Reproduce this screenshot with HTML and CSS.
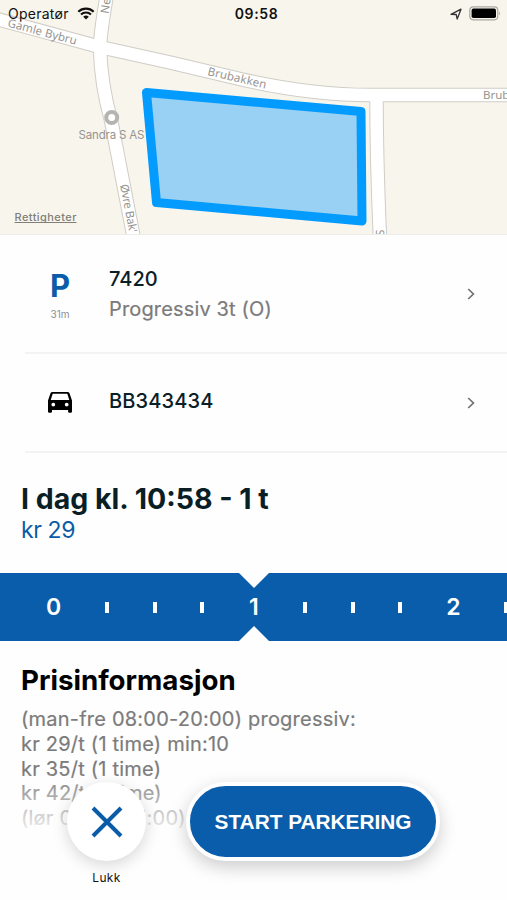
FILE: index.html
```html
<!DOCTYPE html>
<html lang="no">
<head>
<meta charset="utf-8">
<meta name="viewport" content="width=device-width">
<title>Parkering</title>
<link rel="stylesheet" href="styles.css">
</head>
<body>
<main class="screen">
  <section class="map">
    <svg class="map-canvas" viewBox="0 0 507 234" aria-hidden="true">
      <g class="road-edge">
        <path d="M-5 18.500L100 47Q170 62 240 79Q310 95 370 95H512"/>
        <path d="M107-6Q100 35 100 48Q101 85 111 120Q119 160 134 239"/>
        <path d="M376.500 96Q376.500 160 380 239"/>
      </g>
      <g class="road">
        <path d="M-5 18.500L100 47Q170 62 240 79Q310 95 370 95H512"/>
        <path d="M107-6Q100 35 100 48Q101 85 111 120Q119 160 134 239"/>
        <path d="M376.500 96Q376.500 160 380 239"/>
      </g>
      <path class="zone" d="M146.500 92.500L361 111.500L362 221L156.500 202.500Z"/>
      <circle class="poi" cx="111.700" cy="117.500" r="5.500"/>
      <g class="street">
        <text transform="translate(7 26.500) rotate(15)" textLength="71">Gamle Bybru</text>
        <text transform="translate(207 75) rotate(13)" textLength="60">Brubakken</text>
        <text transform="translate(108.500 14) rotate(-82)">Ne</text>
        <text x="483" y="99">Brub</text>
        <text transform="translate(120 185) rotate(79)" textLength="49">Øvre Bak'</text>
        <text transform="translate(384 236) rotate(-88)">S</text>
      </g>
      <text class="poi-name" x="78.500" y="138.500" textLength="66">Sandra S AS</text>
      <text class="rights" x="14.500" y="221" textLength="62">Rettigheter</text>
      <path class="rights-line" d="M14.500 222.500h62"/>
    </svg>
    <header class="status">
      <div class="carrier">Operatør
        <svg class="wifi" viewBox="0 0 18 13"><path d="M1.300 4.700a11 11 0 0 1 15.400 0M4 7.500a7.200 7.200 0 0 1 10 0"/><path class="solid" d="M6.200 9.700a4.200 4.200 0 0 1 5.600 0L9 12.500z"/></svg>
      </div>
      <div class="clock">09:58</div>
      <div class="indicators">
        <svg class="location" viewBox="0 0 12 12"><path d="M1 6.300L11 1.200 7.200 11 6.200 6.500z"/></svg>
        <svg class="battery" viewBox="0 0 32 15"><rect class="shell" x=".8" y=".8" width="28" height="13" rx="3.500"/><rect x="2.600" y="2.600" width="24.400" height="9.400" rx="1.800"/><path class="cap" d="M30 5.500q2 1.800 0 3.800z"/></svg>
      </div>
    </header>
  </section>

  <section class="row row-zone">
    <div class="lead"><span class="letter">P</span><span class="distance">31m</span></div>
    <div class="info"><div class="title">7420</div><div class="subtitle">Progressiv 3t (O)</div></div>
    <svg class="chevron" viewBox="0 0 8 12"><path d="M1.200 1L6.400 6 1.200 11"/></svg>
  </section>
  <section class="row row-car">
    <div class="lead"><svg class="car" viewBox="0 0 24 21"><path fill-rule="evenodd" d="M4.500 0h15q1.600 0 2.100 1.400L24 8.500V19.500q0 1.300-1.300 1.300h-1.300q-1.300 0-1.300-1.300V18H4v1.500q0 1.300-1.300 1.300H1.300Q0 20.800 0 19.500V8.500L2.400 1.400Q2.900 0 4.500 0zM4.700 1.800L2.700 8h18.600l-2-6.200zM5.300 10.700a1.900 1.900 0 1 0 0 3.800 1.900 1.900 0 0 0 0-3.800zM18.700 10.700a1.900 1.900 0 1 0 0 3.800 1.900 1.900 0 0 0 0-3.800z"/></svg></div>
    <div class="info"><div class="title plate">BB343434</div></div>
    <svg class="chevron" viewBox="0 0 8 12"><path d="M1.200 1L6.400 6 1.200 11"/></svg>
  </section>

  <section class="summary">
    <h1 class="until">I dag kl. 10:58 - 1 t</h1>
    <div class="cost">kr 29</div>
  </section>

  <section class="ruler">
    <span>0</span><i></i><i></i><i></i><span>1</span><i></i><i></i><i></i><span>2</span><i></i>
  </section>

  <section class="prices">
    <h2 class="prices-title">Prisinformasjon</h2>
    <p class="price-lines">(man-fre 08:00-20:00) progressiv:<br>kr 29/t (1 time) min:10<br>kr 35/t (1 time)<br>kr 42/t (1 time)<br>(lør 08:00-15:00)</p>
  </section>

  <footer class="actions">
    <div class="close">
      <button class="close-button" aria-label="Lukk"><svg viewBox="0 0 32 32"><path d="M2 2L30 30M30 2L2 30"/></svg></button>
      <span class="close-label">Lukk</span>
    </div>
    <button class="start">START PARKERING</button>
  </footer>
</main>
</body>
</html>
```
FILE: styles.css
```css
* { box-sizing: border-box; }
body { margin: 0; background: #fff; font-family: Inter, "Liberation Sans", sans-serif; }
h1, h2, p { margin: 0; }
button { border: 0; padding: 0; font: inherit; }

.screen { position: relative; width: 507px; height: 900px; overflow: hidden; display: flex; flex-direction: column; background: #fefefe; }

.map { position: relative; flex: 0 0 235px; background: #f8f5ed; overflow: hidden; border-bottom: 1px solid #ececea; }
.map-canvas { display: block; width: 507px; height: 234px; }
.road-edge path, .road path { fill: none; stroke-width: 14.500px; }
.road-edge path { stroke: #d0cdc6; }
.road path { stroke: #fff; stroke-width: 12.500px; }
.zone { fill: #98d1f3; stroke: #049bff; stroke-width: 9px; stroke-linejoin: round; }
.poi { fill: #fff; stroke: #b5b4b1; stroke-width: 4px; }
.street { font: 11.500px "Noto Sans", sans-serif; fill: #96948f; }
.poi-name { font: 11.500px Inter, sans-serif; fill: #96948f; }
.rights { font: 500 11px Inter, sans-serif; fill: #817f78; }
.rights-line { stroke: #817f78; }

.status { position: absolute; inset: 0 0 auto; height: 27px; padding: 0 8px; display: grid; grid-template-columns: 1fr auto 1fr; align-items: center; font-size: 14px; color: #111; }
.carrier { display: flex; align-items: center; gap: 8px; letter-spacing: .25px; }
.wifi { width: 18px; height: 13px; fill: none; stroke: #111; stroke-width: 2.200px; }
.wifi .solid { fill: #111; stroke: none; }
.clock { padding-left: 6px; font-weight: 600; letter-spacing: .6px; }
.indicators { display: flex; justify-content: flex-end; align-items: center; gap: 7px; margin-right: -2px; }
.location { width: 12px; height: 12px; fill: none; stroke: #333; stroke-width: 1.300px; stroke-linejoin: round; }
.battery { width: 32px; height: 15px; }
.battery .shell { fill: none; stroke: #aaa8a3; stroke-width: 1.200px; }
.battery .cap { fill: #aaa8a3; }

.row { margin-left: 25px; padding-right: 32px; display: flex; align-items: center; border-bottom: 2px solid #f3f3f3; }
.row-zone { flex: 0 0 119px; }
.row-car { flex: 0 0 99px; }
.lead { width: 70px; display: flex; flex-direction: column; align-items: center; }
.letter { padding-top: 3px; font-size: 31px; line-height: 32px; font-weight: 700; color: #0a5ca9; }
.distance { margin-top: 5px; font-size: 10px; line-height: 14px; color: #909090; }
.car { width: 24px; height: 21px; }
.info { flex: 1; padding-left: 14px; }
.title { padding-top: 1px; font-size: 20px; line-height: 29px; font-weight: 500; color: #0a2028; }
.plate { padding: 0 0 3px; letter-spacing: .15px; }
.subtitle { font-size: 20px; line-height: 30px; letter-spacing: .15px; color: #7b7b7b; -webkit-text-stroke: .2px #7b7b7b; }
.chevron { width: 8px; height: 12px; fill: none; stroke: #727272; stroke-width: 1.700px; }

.summary { flex: 0 0 120px; padding: 28px 21px 0; }
.until { font-size: 28.500px; line-height: 36px; font-weight: 700; color: #0a1e26; white-space: nowrap; }
.cost { font-size: 23px; line-height: 27px; letter-spacing: -.4px; color: #0a5ca9; }

.ruler { position: relative; flex: 0 0 68px; background: #095dab; display: grid; grid-template-columns: 59px repeat(3, 47.700px) 55px repeat(3, 47.700px) 58.200px 47.700px; padding-left: 24.200px; align-items: center; justify-items: center; overflow: hidden; color: #fff; font-size: 23px; font-weight: 600; }
.ruler i { width: 4px; height: 11px; background: #fff; }
.ruler::before, .ruler::after { content: ""; position: absolute; left: 239px; width: 30px; height: 15px; background: #fefefe; }
.ruler::before { top: 0; clip-path: polygon(0 0, 100% 0, 50% 100%); }
.ruler::after { bottom: 0; clip-path: polygon(50% 0, 100% 100%, 0 100%); }

.prices { padding: 21px 21px 0; }
.prices-title { font-size: 27.700px; line-height: 36px; font-weight: 700; color: #000; }
.price-lines { margin-top: 9px; font-size: 20px; line-height: 24.800px; letter-spacing: .22px; color: #7b7b7b; -webkit-text-stroke: .2px #7b7b7b; white-space: nowrap; }

.actions { position: absolute; inset: auto 0 0; height: 150px; padding: 32px 67px 0; display: flex; align-items: flex-start; gap: 40px; background: linear-gradient(rgba(254,254,254,0) 15%, rgba(254,254,254,.35) 30%, rgba(254,254,254,.7) 46%, #fefefe 60%); }
.close { width: 79px; display: flex; flex-direction: column; align-items: center; }
.close-button { width: 79px; height: 79px; border-radius: 50%; background: #fff; box-shadow: 0 4px 16px rgba(0,0,0,.16); display: grid; place-items: center; }
.close-button svg { width: 32px; height: 32px; fill: none; stroke: #0a5ca9; stroke-width: 4px; }
.close-label { margin-top: 9px; font-size: 12px; line-height: 16px; color: #111; letter-spacing: .3px; }
.start { width: 254px; height: 79px; border: 4px solid #fff; border-radius: 40px; background: #095dab; color: #fff; font: 700 20.800px "Liberation Sans", sans-serif; box-shadow: 0 6px 18px rgba(0,0,0,.2); }
```
